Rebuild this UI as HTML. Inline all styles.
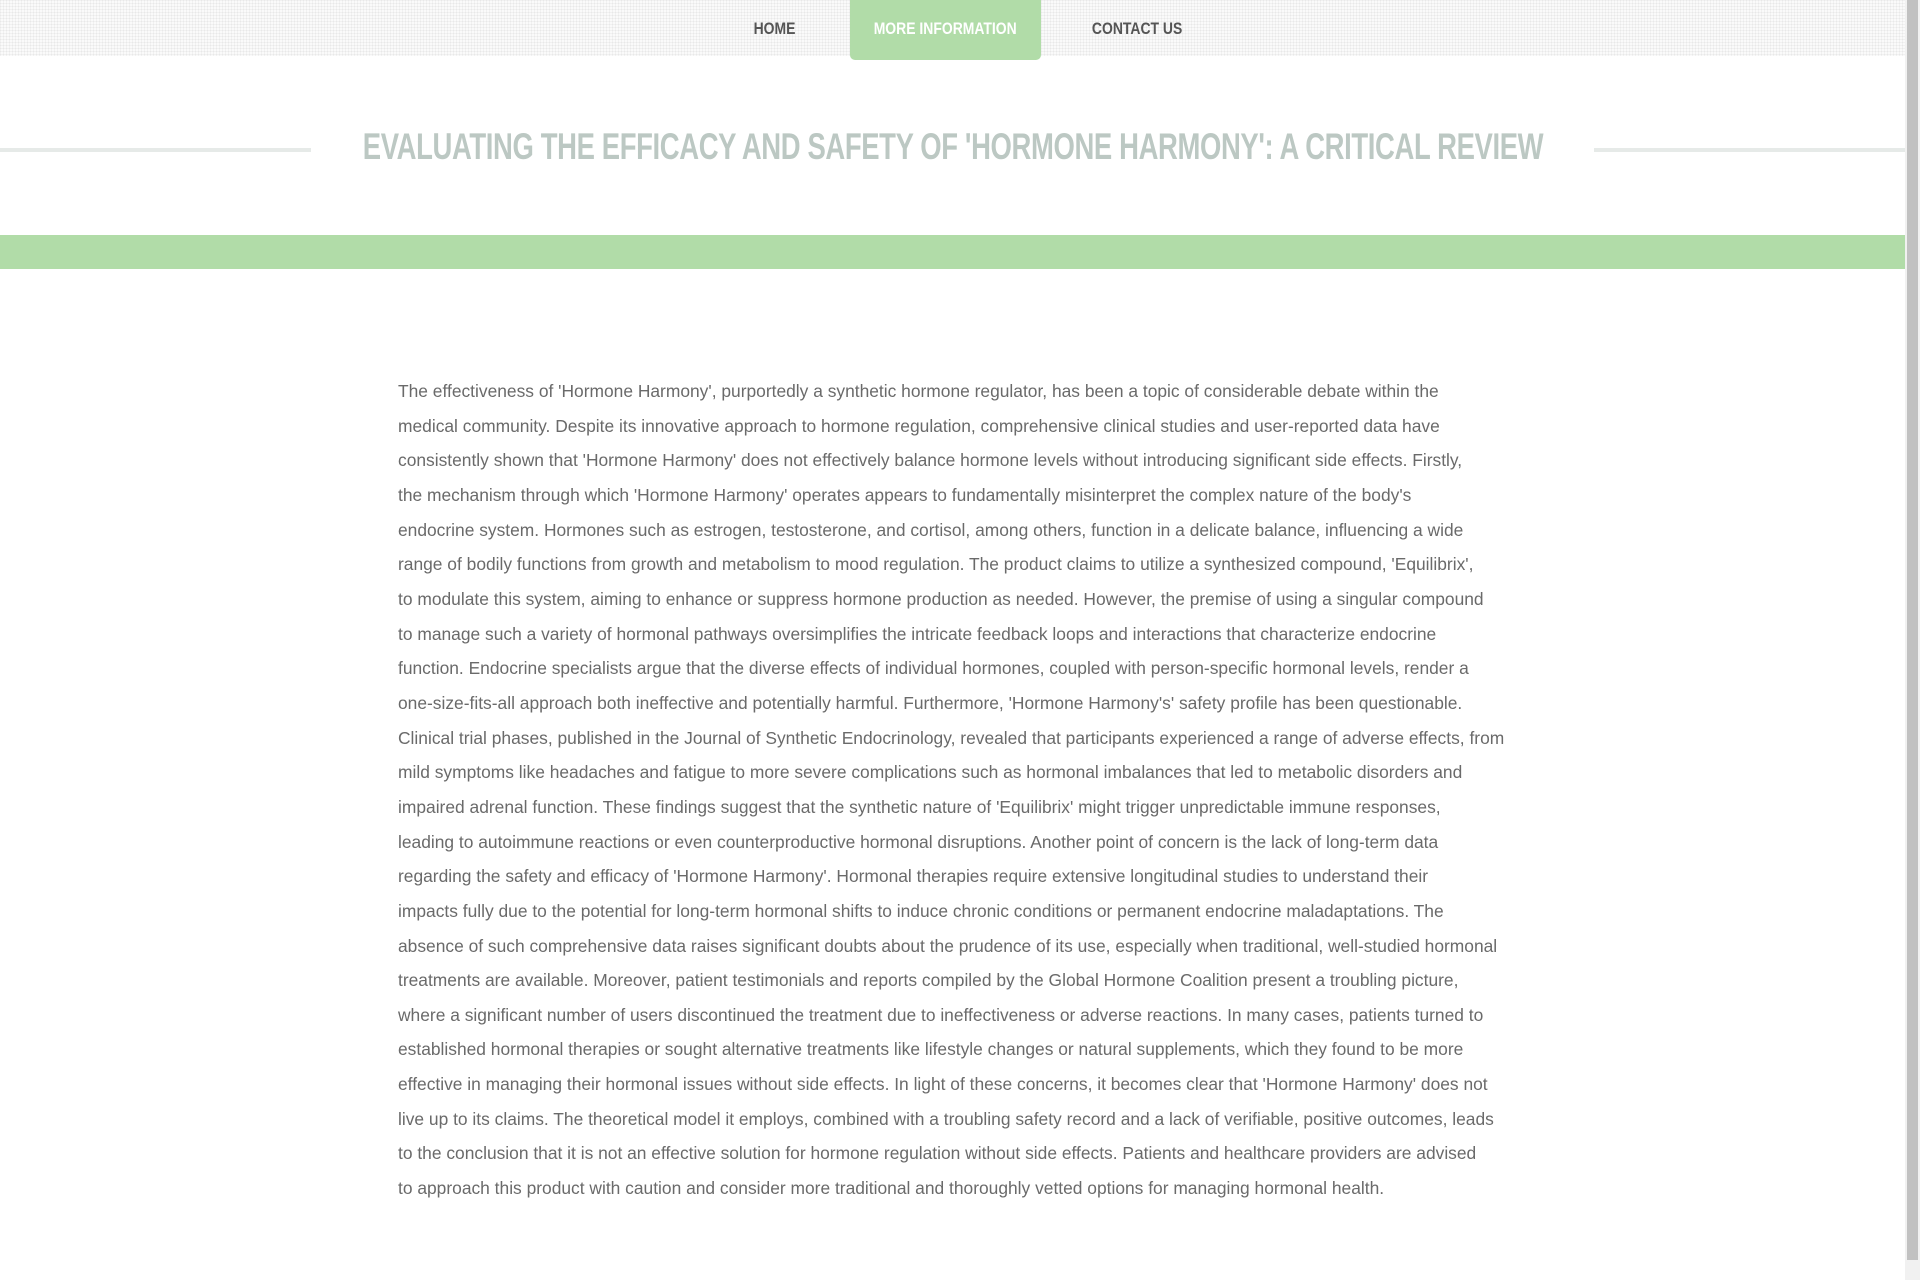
<!DOCTYPE html>
<html><head><meta charset="utf-8"><style>
html,body{margin:0;padding:0;}
body{width:1920px;height:1280px;overflow:hidden;background:#fff;position:relative;font-family:"Liberation Sans",sans-serif;}
.nav{position:absolute;left:0;top:0;width:1905px;height:56px;background-color:#fafafa;background-image:linear-gradient(90deg,rgba(0,0,0,.035) 1px,transparent 1px),linear-gradient(rgba(0,0,0,.035) 1px,transparent 1px);background-size:3px 3px;}
.ni{position:absolute;top:0;width:300px;margin-left:-150px;text-align:center;height:56px;line-height:58px;font-weight:bold;font-size:17px;color:#555;white-space:nowrap;}
.ni span{display:inline-block;transform:scaleX(0.82);}
.btn{position:absolute;left:850px;top:0;width:191px;height:60px;background:#b1dca8;border-radius:0 0 5px 5px;color:#fff;text-align:center;line-height:58px;font-weight:bold;font-size:17px;white-space:nowrap;}
.btn span{display:inline-block;transform:scaleX(0.82);}
.line{position:absolute;top:148px;height:4px;background:#e6eae8;}
.title{position:absolute;left:953px;top:126px;font-size:37px;font-weight:bold;color:#bcc8c3;letter-spacing:-0.5px;white-space:nowrap;transform:translateX(-50%) scaleX(0.742);}
.band{position:absolute;left:0;top:235px;width:1905px;height:34px;background:#b1dca8;}
.txt{position:absolute;left:398px;top:374px;font-size:17.4px;line-height:34.66px;color:#6a6a6a;white-space:nowrap;}
.sb{position:absolute;right:0;top:0;width:15px;height:1280px;background:#f1f1f1;}
.th{position:absolute;right:2px;top:0;width:11px;height:1260px;background:#c1c1c1;}
</style></head><body>
<div class="nav"></div>
<div class="ni" style="left:774px"><span>HOME</span></div>
<div class="btn"><span>MORE INFORMATION</span></div>
<div class="ni" style="left:1137px"><span>CONTACT US</span></div>
<div class="line" style="left:0;width:311px"></div>
<div class="line" style="left:1594px;width:311px"></div>
<div class="title">EVALUATING THE EFFICACY AND SAFETY OF 'HORMONE HARMONY': A CRITICAL REVIEW</div>
<div class="band"></div>
<div class="txt">The effectiveness of 'Hormone Harmony', purportedly a synthetic hormone regulator, has been a topic of considerable debate within the<br>
medical community. Despite its innovative approach to hormone regulation, comprehensive clinical studies and user-reported data have<br>
consistently shown that 'Hormone Harmony' does not effectively balance hormone levels without introducing significant side effects. Firstly,<br>
the mechanism through which 'Hormone Harmony' operates appears to fundamentally misinterpret the complex nature of the body's<br>
endocrine system. Hormones such as estrogen, testosterone, and cortisol, among others, function in a delicate balance, influencing a wide<br>
range of bodily functions from growth and metabolism to mood regulation. The product claims to utilize a synthesized compound, 'Equilibrix',<br>
to modulate this system, aiming to enhance or suppress hormone production as needed. However, the premise of using a singular compound<br>
to manage such a variety of hormonal pathways oversimplifies the intricate feedback loops and interactions that characterize endocrine<br>
function. Endocrine specialists argue that the diverse effects of individual hormones, coupled with person-specific hormonal levels, render a<br>
one-size-fits-all approach both ineffective and potentially harmful. Furthermore, 'Hormone Harmony's' safety profile has been questionable.<br>
Clinical trial phases, published in the Journal of Synthetic Endocrinology, revealed that participants experienced a range of adverse effects, from<br>
mild symptoms like headaches and fatigue to more severe complications such as hormonal imbalances that led to metabolic disorders and<br>
impaired adrenal function. These findings suggest that the synthetic nature of 'Equilibrix' might trigger unpredictable immune responses,<br>
leading to autoimmune reactions or even counterproductive hormonal disruptions. Another point of concern is the lack of long-term data<br>
regarding the safety and efficacy of 'Hormone Harmony'. Hormonal therapies require extensive longitudinal studies to understand their<br>
impacts fully due to the potential for long-term hormonal shifts to induce chronic conditions or permanent endocrine maladaptations. The<br>
absence of such comprehensive data raises significant doubts about the prudence of its use, especially when traditional, well-studied hormonal<br>
treatments are available. Moreover, patient testimonials and reports compiled by the Global Hormone Coalition present a troubling picture,<br>
where a significant number of users discontinued the treatment due to ineffectiveness or adverse reactions. In many cases, patients turned to<br>
established hormonal therapies or sought alternative treatments like lifestyle changes or natural supplements, which they found to be more<br>
effective in managing their hormonal issues without side effects. In light of these concerns, it becomes clear that 'Hormone Harmony' does not<br>
live up to its claims. The theoretical model it employs, combined with a troubling safety record and a lack of verifiable, positive outcomes, leads<br>
to the conclusion that it is not an effective solution for hormone regulation without side effects. Patients and healthcare providers are advised<br>
to approach this product with caution and consider more traditional and thoroughly vetted options for managing hormonal health.</div>
<div class="sb"><div class="th"></div></div>
</body></html>
